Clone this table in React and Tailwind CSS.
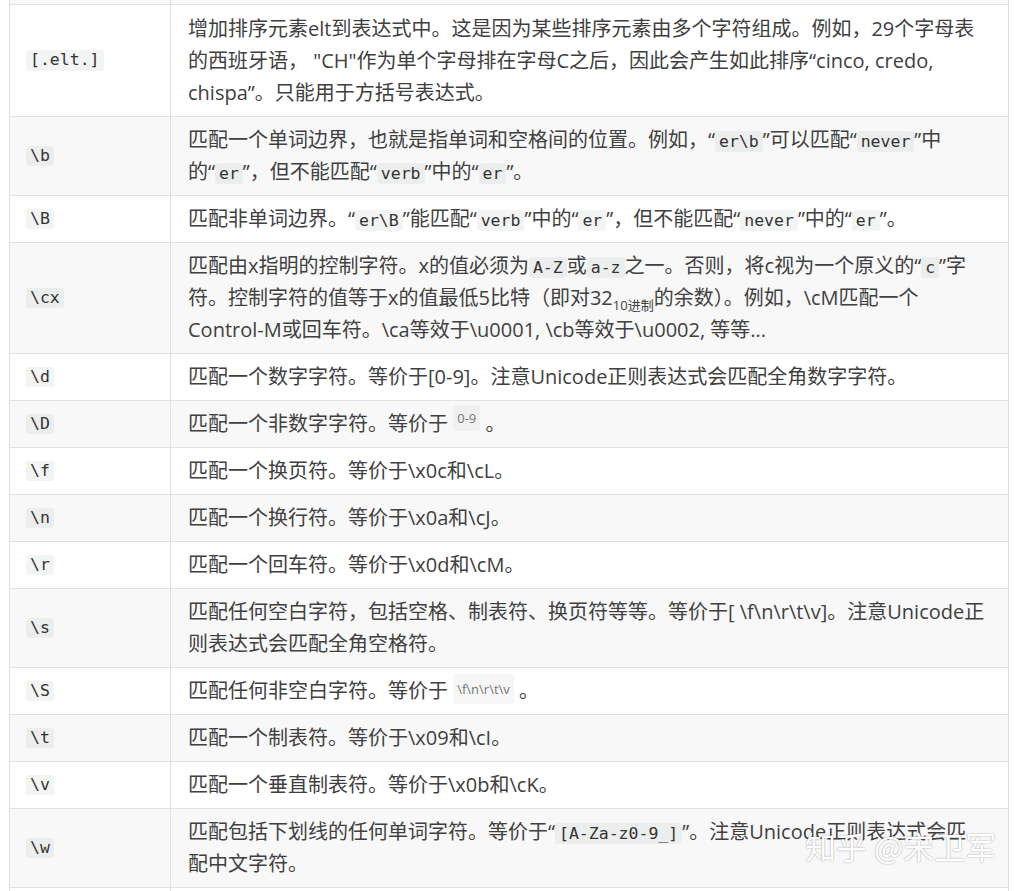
const C = ({ children, className = 'py-[1px]' }) => (
  <code className={`rounded-[3px] bg-[rgba(27,31,35,0.05)] px-[4px] font-['DejaVu_Sans_Mono',monospace] text-[16.5px] leading-none text-[#333] ${className}`}>
    {children}
  </code>
);

const ROWS = [
  {
    k: '[.elt.]',
    pad: 'pt-[8px] pb-[7px]',
    v: (
      <>
        增加排序元素elt到表达式中。这是因为某些排序元素由多个字符组成。例如，29个字母表<br />
        的西班牙语， "CH"作为单个字母排在字母C之后，因此会产生如此排序“cinco, credo,<br />
        chispa”。只能用于方括号表达式。
      </>
    ),
  },
  {
    k: '\\b',
    v: (
      <>
        匹配一个单词边界，也就是指单词和空格间的位置。例如，“<C>er\b</C>”可以匹配“<C>never</C>”中<br />
        的“<C>er</C>”，但不能匹配“<C>verb</C>”中的“<C>er</C>”。
      </>
    ),
  },
  {
    k: '\\B',
    v: (
      <>
        匹配非单词边界。“<C>er\B</C>”能匹配“<C>verb</C>”中的“<C>er</C>”，但不能匹配“<C>never</C>”中的“<C>er</C>”。
      </>
    ),
  },
  {
    k: '\\cx',
    v: (
      <>
        匹配由x指明的控制字符。x的值必须为<C>A-Z</C>或<C>a-z</C>之一。否则，将c视为一个原义的“<C>c</C>”字<br />
        符。控制字符的值等于x的值最低5比特（即对32
        <span className="relative top-[5px] text-[13px] leading-none">10进制</span>
        的余数）。例如，\cM匹配一个<br />
        Control-M或回车符。\ca等效于\u0001, \cb等效于\u0002, 等等...
      </>
    ),
  },
  { k: '\\d', v: '匹配一个数字字符。等价于[0-9]。注意Unicode正则表达式会匹配全角数字字符。' },
  {
    k: '\\D',
    v: (
      <>
        匹配一个非数字字符。等价于{' '}
        <span className="relative -top-[8px] rounded-[3px] bg-[rgba(27,31,35,0.035)] px-[4px] py-[4px] text-[13px] leading-none text-[#777]">0-9</span>{' '}
        。
      </>
    ),
  },
  { k: '\\f', v: '匹配一个换页符。等价于\\x0c和\\cL。' },
  { k: '\\n', v: '匹配一个换行符。等价于\\x0a和\\cJ。' },
  { k: '\\r', v: '匹配一个回车符。等价于\\x0d和\\cM。' },
  {
    k: '\\s',
    v: (
      <>
        匹配任何空白字符，包括空格、制表符、换页符等等。等价于[ \f\n\r\t\v]。注意Unicode正<br />
        则表达式会匹配全角空格符。
      </>
    ),
  },
  {
    k: '\\S',
    v: (
      <>
        匹配任何非空白字符。等价于{' '}
        <span className="relative -top-[4px] rounded-[3px] bg-[rgba(27,31,35,0.04)] px-[4px] py-[6px] text-[13px] leading-none text-[#777]">\f\n\r\t\v</span>{' '}
        。
      </>
    ),
  },
  { k: '\\t', v: '匹配一个制表符。等价于\\x09和\\cI。' },
  { k: '\\v', v: '匹配一个垂直制表符。等价于\\x0b和\\cK。' },
  {
    k: '\\w',
    v: (
      <>
        匹配包括下划线的任何单词字符。等价于“<C>[A-Za-z0-9_]</C>”。注意Unicode正则表达式会匹<br />
        配中文字符。
      </>
    ),
  },
  { k: '\\W', v: '匹配任何非单词字符。等价于“[^A-Za-z0-9_]”。' },
];

export default function App() {
  return (
    <div className="relative h-[891px] w-[1018px] overflow-hidden bg-white font-['Open_Sans','Noto_Sans_CJK_SC',sans-serif] text-[20px] leading-[32px] text-[#404040]">
      <div className="ml-[9px] w-[1000px] border-x border-[#dfe2e5]">
        <div className="grid h-[5px] grid-cols-[161px_1fr] border-b border-[#dfe2e5] bg-[#f8f8f8]">
          <div className="border-r border-[#dfe2e5]" />
          <div />
        </div>
        {ROWS.map((r, i) => (
          <div
            key={r.k}
            className={`grid grid-cols-[161px_1fr] border-b border-[#dfe2e5] ${i % 2 ? 'bg-[#f8f8f8]' : 'bg-white'}`}
          >
            <div className="flex items-center border-r border-[#dfe2e5] pl-[16px]">
              <C className="py-[2px]">{r.k}</C>
            </div>
            <div className={`${r.pad || 'py-[7px]'} pl-[17px] pr-[6px]`}>{r.v}</div>
          </div>
        ))}
      </div>
      <div className="absolute left-[805px] top-[828px] whitespace-nowrap font-['Noto_Sans_CJK_SC',sans-serif] text-[31px] leading-[36px] text-white [text-shadow:0_0_1.5px_rgba(0,0,0,0.45)]">
        知乎 @宋卫军
      </div>
    </div>
  );
}
